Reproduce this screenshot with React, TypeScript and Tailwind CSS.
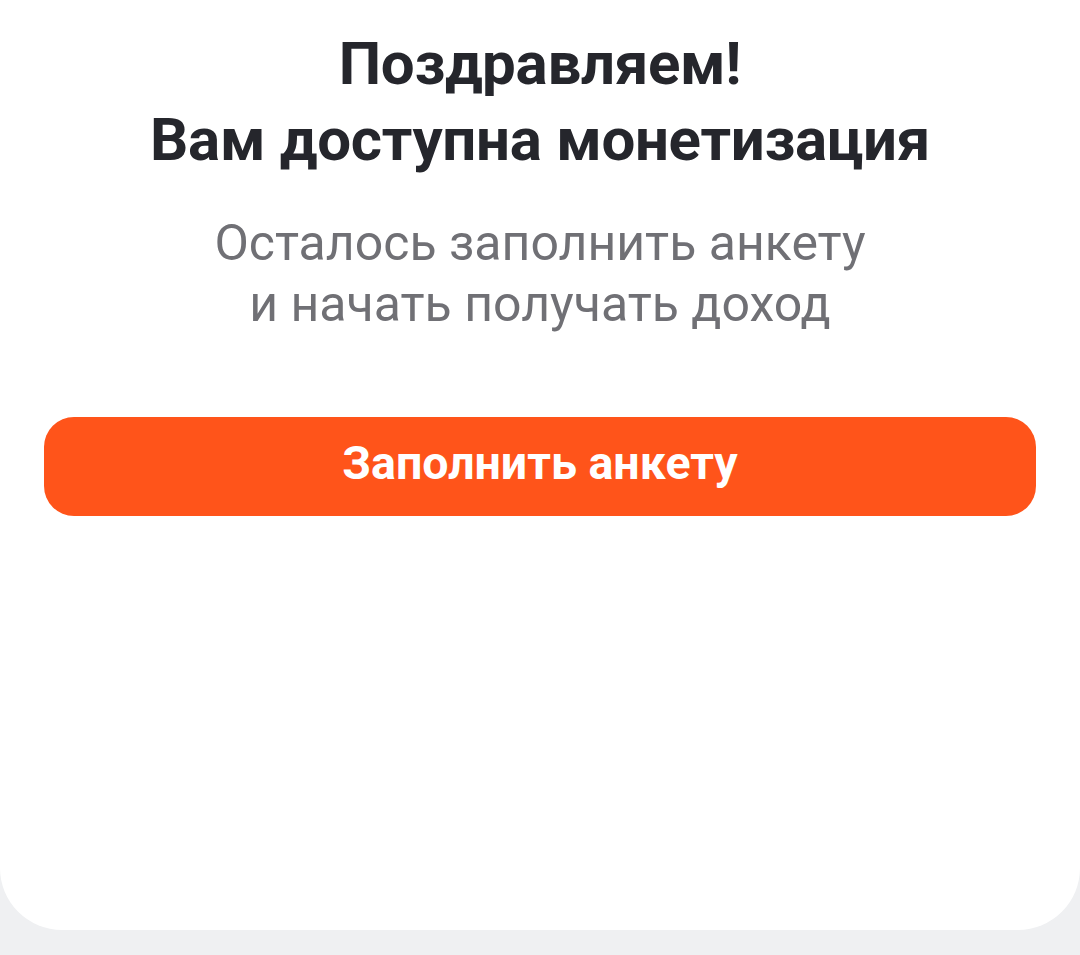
export default function App() {
  return (
    <div className="w-[1080px] h-[955px] bg-[#eff0f2] overflow-hidden" style={{ fontFamily: 'Roboto, "Noto Sans", sans-serif' }}>
      <div className="h-[930px] bg-white rounded-b-[62px] flex flex-col items-center pt-[26px] px-[44px]">
        <h1 className="text-[60px] leading-[76px] font-bold text-[#25262c] text-center tracking-[-0.3px]">
          Поздравляем!
          <br />
          Вам доступна монетизация
        </h1>
        <p className="mt-[35px] text-[50px] leading-[61px] text-[#707075] text-center">
          Осталось заполнить анкету
          <br />и начать получать доход
        </p>
        <button className="mt-[82px] w-full h-[99px] rounded-[30px] bg-[#ff541a] text-white text-[46.5px] font-bold flex items-center justify-center pb-[6px]">
          Заполнить анкету
        </button>
      </div>
    </div>
  );
}
